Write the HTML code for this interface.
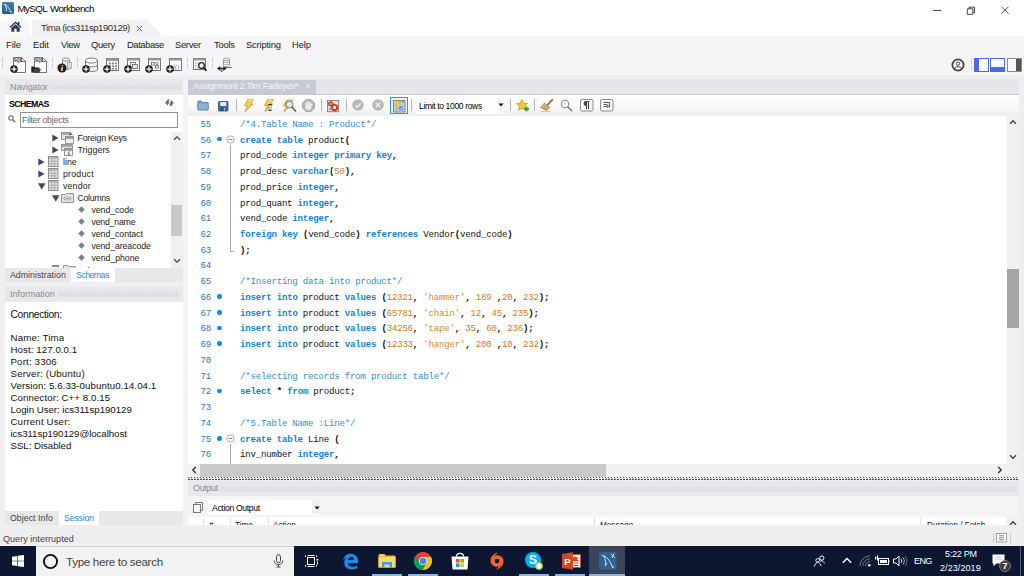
<!DOCTYPE html>
<html><head><meta charset="utf-8"><title>MySQL Workbench</title>
<style>
*{box-sizing:border-box;margin:0;padding:0}
html,body{width:1024px;height:576px;overflow:hidden}
body{position:relative;background:#efeff1;font-family:"Liberation Sans",sans-serif;font-size:9px;color:#111}
.a{position:absolute;white-space:nowrap}
.t{position:absolute;white-space:nowrap;line-height:12px;height:12px}
.m{font-size:9.4px;color:#222}
.tr{font-size:8.8px;color:#222}
.inf{font-size:9.7px;color:#111}
.hd{font-size:9px;color:#8a8a94}
.code{font-family:"Liberation Mono",monospace;font-size:9.1px;letter-spacing:-0.222px;line-height:12px;height:12px;color:#111;white-space:pre;position:absolute}
.k{color:#1582d0;font-weight:bold}
.c{color:#2f8fd0}
.n{color:#dc7a12}
.s{color:#e08a2c}
.ln{color:#2a78b4}
.dots{position:absolute;height:4.500px;background:repeating-conic-gradient(#d9d9df 0% 25%,transparent 0% 50%) 0 0/3px 3px}
svg{position:absolute;overflow:visible}
</style></head>
<body>

<div class="a" style="left:0;top:0;width:1024px;height:36px;background:#fff"></div>
<svg style="left:1.500px;top:2px" width="12" height="12" viewBox="0 0 13 13"><defs><linearGradient id="wbg" x1="0" y1="0" x2="0" y2="1"><stop offset="0" stop-color="#3c84aa"/><stop offset="1" stop-color="#1f5c86"/></linearGradient></defs><rect x="0" y="0" width="13" height="13" rx="1.500" fill="url(#wbg)"/><path d="M2.5 2.5 C5 3,7.5 5.5,9 10.5 M3.5 3 C4.5 5.5,5 7.5,5 9.5 M9 10.5 L10.8 11" stroke="#fff" stroke-width="0.9" fill="none" stroke-linecap="round"/></svg>
<div class="t m" id="t1" style="left:17.5px;top:2.7px;letter-spacing:-0.664px;font-size:9.9px;word-spacing:1.2px;color:#000">MySQL Workbench</div>
<svg style="left:930px;top:3px" width="84" height="14" viewBox="0 0 84 14"><path d="M3 7.500H11" stroke="#333" stroke-width="0.900"/><path d="M37.300 5.800H42.800V11.300H37.300Z M39 5.800V4.200H44.500V9.700H42.800" stroke="#333" stroke-width="0.900" fill="none"/><path d="M71.500 3.700L78.500 10.700M78.500 3.700L71.500 10.700" stroke="#333" stroke-width="0.900"/></svg>
<svg style="left:0;top:18px" width="32" height="18" viewBox="0 0 32 18"><path d="M0 18V1.500H24.500C26.500 1.500,27 2.500,27.800 4.500L30.500 18Z" fill="#f8f8fa"/></svg>
<svg style="left:31px;top:18px" width="135" height="18" viewBox="0 0 135 18"><path d="M1 18V3C1 2,1.500 1.500,2.500 1.500H117L131 18Z" fill="#f2f2f4"/></svg>
<svg style="left:9.400px;top:21px" width="13" height="11.300" viewBox="0 0 15 13"><path d="M7.500 0.500L0.500 6.800L1.600 7.800L7.500 2.600L13.400 7.800L14.500 6.800L12 4.500V1.200H10.300V3Z" fill="#1f2f4f"/><path d="M2.600 7.800L7.500 3.600L12.400 7.800V12.500H8.800V9H6.200V12.500H2.600Z" fill="#2c3f63"/></svg>
<div class="t m" id="t2" style="left:41px;top:21.8px;letter-spacing:-0.495px;font-size:9.6px;color:#333">Tima (ics311sp190129)</div>
<svg style="left:136px;top:25px" width="7" height="7" viewBox="0 0 7 7"><path d="M0.800 0.800L6.200 6.200M6.200 0.800L0.800 6.200" stroke="#666" stroke-width="1"/></svg>
<div class="a" style="left:0;top:36px;width:1024px;height:39px;background:#f5f5f7"></div>
<div class="t m" id="t3" style="left:6px;top:39px;letter-spacing:-0.077px;">File</div>
<div class="t m" id="t4" style="left:33px;top:39px;letter-spacing:-0.089px;">Edit</div>
<div class="t m" id="t5" style="left:61px;top:39px;letter-spacing:-0.339px;">View</div>
<div class="t m" id="t6" style="left:91px;top:39px;letter-spacing:-0.346px;">Query</div>
<div class="t m" id="t7" style="left:127px;top:39px;letter-spacing:-0.418px;">Database</div>
<div class="t m" id="t8" style="left:175px;top:39px;letter-spacing:-0.304px;">Server</div>
<div class="t m" id="t9" style="left:214px;top:39px;letter-spacing:-0.218px;">Tools</div>
<div class="t m" id="t10" style="left:246px;top:39px;letter-spacing:-0.187px;">Scripting</div>
<div class="t m" id="t11" style="left:292px;top:39px;letter-spacing:-0.120px;">Help</div>
<div class="a" style="left:2px;top:58px;width:1px;height:10px;background-image:linear-gradient(to bottom,#9fb0d4 50%,transparent 50%);background-size:1px 2px"></div>
<div class="a" style="left:52px;top:58px;width:1px;height:10px;background-image:linear-gradient(to bottom,#9fb0d4 50%,transparent 50%);background-size:1px 2px"></div>
<div class="a" style="left:77px;top:58px;width:1px;height:10px;background-image:linear-gradient(to bottom,#9fb0d4 50%,transparent 50%);background-size:1px 2px"></div>
<div class="a" style="left:187px;top:58px;width:1px;height:10px;background-image:linear-gradient(to bottom,#9fb0d4 50%,transparent 50%);background-size:1px 2px"></div>
<div class="a" style="left:212px;top:58px;width:1px;height:10px;background-image:linear-gradient(to bottom,#9fb0d4 50%,transparent 50%);background-size:1px 2px"></div>
<svg style="left:10px;top:57px" width="17" height="16" viewBox="0 0 17 16"><path d="M3.500 0.500H11.500L15.500 4.500V15.500H3.500Z" fill="#fbfbfb" stroke="#666" stroke-width="0.900"/><path d="M11.500 0.500V4.500H15.500" fill="none" stroke="#555" stroke-width="0.800"/><text x="4" y="5.400" font-family="Liberation Serif,serif" font-size="5.200" font-weight="bold" fill="#222" textLength="8.500" lengthAdjust="spacingAndGlyphs">SQL</text><circle cx="4" cy="12" r="3.800" fill="#1e1e1e"/><path d="M4 9.500V14.500M1.500 12H6.500" stroke="#fff" stroke-width="1.250"/></svg>
<svg style="left:31px;top:57px" width="17" height="16" viewBox="0 0 17 16"><path d="M3.500 0.500H11.500L15.500 4.500V15.500H3.500Z" fill="#fbfbfb" stroke="#666" stroke-width="0.900"/><path d="M11.500 0.500V4.500H15.500" fill="none" stroke="#555" stroke-width="0.800"/><text x="4" y="5.400" font-family="Liberation Serif,serif" font-size="5.200" font-weight="bold" fill="#222" textLength="8.500" lengthAdjust="spacingAndGlyphs">SQL</text><path d="M0.300 15.500V9.500H3L4 10.600H8.500V15.500Z" fill="#222"/><path d="M1.500 15.500L3.200 12H10L8.500 15.500Z" fill="#444"/></svg>
<svg style="left:57px;top:57px" width="16" height="16" viewBox="0 0 16 16"><path d="M5.500 2.500V11.500C5.500 13.300,12.500 13.300,12.500 11.500V2.500" fill="#e8e8e8" stroke="#777" stroke-width="0.800"/><ellipse cx="9" cy="2.500" rx="3.500" ry="1.500" fill="#f4f4f4" stroke="#777" stroke-width="0.800"/><rect x="10.500" y="5.500" width="4" height="6" fill="#ddd" stroke="#999" stroke-width="0.700"/><circle cx="5" cy="11" r="4.500" fill="#1e1e1e"/><text x="5" y="14" text-anchor="middle" font-family="Liberation Serif,serif" font-size="8.500" font-weight="bold" font-style="italic" fill="#fff">i</text></svg>
<svg style="left:82px;top:57px" width="17" height="16" viewBox="0 0 17 16"><path d="M3.500 3.500V12.500C3.500 15,15.500 15,15.500 12.500V3.500" fill="#fafafa" stroke="#666" stroke-width="0.900"/><ellipse cx="9.500" cy="3.500" rx="6" ry="2.500" fill="#fff" stroke="#666" stroke-width="0.900"/><path d="M3.500 8C3.500 10.500,15.500 10.500,15.500 8" fill="none" stroke="#555" stroke-width="0.800"/><circle cx="4" cy="12" r="3.800" fill="#1e1e1e"/><path d="M4 9.500V14.500M1.500 12H6.500" stroke="#fff" stroke-width="1.250"/></svg>
<svg style="left:103px;top:57px" width="17" height="16" viewBox="0 0 17 16"><rect x="3.500" y="1.500" width="12" height="12" fill="#fafafa" stroke="#666" stroke-width="0.900"/><rect x="3.500" y="1.500" width="12" height="2.500" fill="#9a9a9a"/><g fill="#888"><rect x="6" y="5.500" width="2" height="1.800"/><rect x="9" y="5.500" width="2" height="1.800"/><rect x="12" y="5.500" width="2" height="1.800"/><rect x="6" y="8.300" width="2" height="1.800"/><rect x="9" y="8.300" width="2" height="1.800"/><rect x="12" y="8.300" width="2" height="1.800"/><rect x="9" y="11" width="2" height="1.500"/><rect x="12" y="11" width="2" height="1.500"/></g><circle cx="4" cy="12" r="3.800" fill="#1e1e1e"/><path d="M4 9.500V14.500M1.500 12H6.500" stroke="#fff" stroke-width="1.250"/></svg>
<svg style="left:124px;top:57px" width="17" height="16" viewBox="0 0 17 16"><rect x="3.500" y="1.500" width="12" height="12" fill="#fafafa" stroke="#666" stroke-width="0.900"/><rect x="3.500" y="1.500" width="12" height="2" fill="#9a9a9a"/><rect x="6.500" y="5.500" width="5" height="4" fill="#fff" stroke="#666" stroke-width="0.800"/><rect x="8.500" y="7.500" width="5" height="4" fill="#eee" stroke="#666" stroke-width="0.800"/><circle cx="4" cy="12" r="3.800" fill="#1e1e1e"/><path d="M4 9.500V14.500M1.500 12H6.500" stroke="#fff" stroke-width="1.250"/></svg>
<svg style="left:145px;top:57px" width="17" height="16" viewBox="0 0 17 16"><rect x="3.500" y="1.500" width="12" height="12" fill="#fafafa" stroke="#666" stroke-width="0.900"/><rect x="3.500" y="1.500" width="12" height="2" fill="#9a9a9a"/><rect x="6.500" y="5.500" width="3" height="2.500" fill="none" stroke="#666" stroke-width="0.800"/><rect x="10.500" y="8.500" width="3" height="2.500" fill="none" stroke="#666" stroke-width="0.800"/><circle cx="12" cy="6.500" r="1.200" fill="none" stroke="#666" stroke-width="0.700"/><circle cx="4" cy="12" r="3.800" fill="#1e1e1e"/><path d="M4 9.500V14.500M1.500 12H6.500" stroke="#fff" stroke-width="1.250"/></svg>
<svg style="left:166px;top:57px" width="17" height="16" viewBox="0 0 17 16"><rect x="3.500" y="1.500" width="12" height="12" fill="#fafafa" stroke="#666" stroke-width="0.900"/><rect x="3.500" y="1.500" width="12" height="2" fill="#9a9a9a"/><text x="10" y="11.500" text-anchor="middle" font-family="Liberation Serif,serif" font-size="7" fill="#888" font-style="italic">f()</text><circle cx="4" cy="12" r="3.800" fill="#1e1e1e"/><path d="M4 9.500V14.500M1.500 12H6.500" stroke="#fff" stroke-width="1.250"/></svg>
<svg style="left:193px;top:57px" width="15" height="16" viewBox="0 0 15 16"><rect x="0.500" y="1.500" width="12" height="11" fill="#fafafa" stroke="#666" stroke-width="0.900"/><rect x="0.500" y="1.500" width="12" height="2" fill="#9a9a9a"/><path d="M2 6H5M2 8.500H4.500M2 11H5" stroke="#888" stroke-width="1" stroke-dasharray="1 1"/><circle cx="8.500" cy="8.500" r="2.800" fill="#fff" stroke="#222" stroke-width="1.300"/><path d="M10.600 10.600L13.500 13.800" stroke="#222" stroke-width="1.800"/></svg>
<svg style="left:216px;top:57px" width="17" height="16" viewBox="0 0 17 16"><path d="M7.500 2.300V8.500C7.500 10,13.500 10,13.500 8.500V2.300" fill="#f4f4f4" stroke="#8a8a8a" stroke-width="0.800"/><ellipse cx="10.500" cy="2.300" rx="3" ry="1.300" fill="#fcfcfc" stroke="#8a8a8a" stroke-width="0.800"/><path d="M7.500 4.500C7.500 5.800,13.500 5.800,13.500 4.500M7.500 6.600C7.500 7.900,13.500 7.900,13.500 6.600" fill="none" stroke="#8a8a8a" stroke-width="0.700"/><path d="M9 10.600H16" stroke="#666" stroke-width="0.900"/><path d="M10.500 9.500V11" stroke="#666" stroke-width="0.900"/><path d="M1 11.500L4.200 9V10.700H6V12.300H4.200V14Z" fill="#222"/><path d="M10.500 11.500L7.300 9V10.700H5.500V12.300H7.300V14Z" fill="#222"/><path d="M4 13.500L5.700 15L7.500 13.500Z" fill="#222"/></svg>
<svg style="left:951px;top:58px" width="14" height="14" viewBox="0 0 14 14"><circle cx="7" cy="7" r="5.600" fill="#fff" stroke="#444" stroke-width="1.800"/><circle cx="7" cy="5.600" r="1.700" fill="none" stroke="#444" stroke-width="1"/><path d="M3.600 10.500C4.200 8,9.800 8,10.400 10.500" fill="none" stroke="#444" stroke-width="1"/></svg>
<div class="a" style="left:971px;top:59px;width:1px;height:11px;background-image:linear-gradient(to bottom,#b0b8d0 50%,transparent 50%);background-size:1px 2px"></div>
<div class="a" style="left:974px;top:58px;width:15px;height:14px;border:1px solid #4a6ae0;background:#f8f8fa"><div style="width:4px;height:12px;background:#4a6ae0"></div></div>
<div class="a" style="left:990px;top:58px;width:15px;height:14px;border:1px solid #4a6ae0;background:#f8f8fa"><div style="margin-top:8px;width:13px;height:4px;background:#4a6ae0"></div></div>
<div class="a" style="left:1007px;top:58px;width:15px;height:14px;border:1px solid #8a8a8a;background:#f8f8fa"><div style="margin-left:8px;width:5px;height:12px;background:#555"></div></div>
<div class="a" style="left:183px;top:79px;width:4.5px;height:446px;background:#f3f3f5;"></div>
<div class="a" style="left:4.5px;top:79px;width:178.5px;height:16px;background:#e8e8ea;"></div>
<div class="t hd" id="t12" style="left:10px;top:81px;letter-spacing:-0.081px;">Navigator</div>
<div class="dots" style="left:50px;top:85px;width:131px"></div>
<div class="a" style="left:4.5px;top:95px;width:178.5px;height:173px;background:#fff;"></div>
<div class="t m" id="t13" style="left:9px;top:97.7px;letter-spacing:-0.600px;font-weight:bold;font-size:8.8px;color:#000">SCHEMAS</div>
<svg style="left:165px;top:99px" width="9" height="7.5" viewBox="0 0 9 7.500"><path d="M4.300 0.300C2.200 0.300,1.300 1.800,1.300 3.100H0L2.300 6.600L4.600 3.100H3.600C3.600 2.500,3.800 2.200,4.300 2.100Z" fill="#587192"/><path d="M4.700 7.300C6.800 7.300,7.700 5.800,7.700 4.500H9L6.700 1L4.400 4.500H5.400C5.400 5.100,5.200 5.400,4.700 5.500Z" fill="#587192"/></svg>
<svg style="left:8px;top:115px" width="8" height="8" viewBox="0 0 8 8"><circle cx="3" cy="3" r="2.200" fill="none" stroke="#777" stroke-width="1.200"/><path d="M4.600 4.600L7.300 7.300" stroke="#777" stroke-width="1.500"/></svg>
<div class="a" style="left:20px;top:112px;width:158px;height:15.600px;border:1px solid #959595;background:#fff"></div>
<div class="t tr" id="t14" style="left:22px;top:114px;letter-spacing:-0.220px;color:#666">Filter objects</div>
<div class="a" style="left:171px;top:131.5px;width:12px;height:136.5px;background:#f0f0f0;"></div>
<div class="a" style="left:171px;top:205px;width:11px;height:31px;background:#c9c9c9;"></div>
<svg style="left:173px;top:135px" width="8" height="6" viewBox="0 0 8 6"><path d="M1 4.800L4 1.800L7 4.800" fill="none" stroke="#444" stroke-width="1.300"/></svg>
<svg style="left:173px;top:258px" width="8" height="6" viewBox="0 0 8 6"><path d="M1 1.200L4 4.200L7 1.200" fill="none" stroke="#444" stroke-width="1.300"/></svg>
<svg style="left:52px;top:134px" width="7" height="8" viewBox="0 0 7 8"><path d="M0.300 0.500L6.600 4L0.300 7.500Z" fill="#3d4a68"/></svg>
<svg style="left:61px;top:132px" width="13" height="12" viewBox="0 0 13 12"><rect x="0.500" y="0.500" width="8" height="7" fill="#e6e6e6" stroke="#8e8e8e" stroke-width="0.900"/><rect x="1" y="1" width="7" height="1.800" fill="#a4a4a4"/><rect x="4.500" y="4.500" width="8" height="7" fill="#f0f0f0" stroke="#8e8e8e" stroke-width="0.900"/><rect x="5" y="5" width="7" height="1.800" fill="#999"/><path d="M9 0L12 3H9Z" fill="#3a5a8a"/></svg>
<div class="t tr" id="t15" style="left:77.5px;top:132px;letter-spacing:-0.211px;">Foreign Keys</div>
<svg style="left:52px;top:146px" width="7" height="8" viewBox="0 0 7 8"><path d="M0.300 0.500L6.600 4L0.300 7.500Z" fill="#3d4a68"/></svg>
<svg style="left:61px;top:144px" width="13" height="12" viewBox="0 0 13 12"><rect x="0.500" y="0.500" width="11" height="6" fill="#e6e6e6" stroke="#8e8e8e" stroke-width="0.900"/><rect x="1" y="1" width="10" height="1.800" fill="#a4a4a4"/><rect x="3.500" y="4.500" width="8" height="7" fill="#f0f0f0" stroke="#8e8e8e" stroke-width="0.900"/><rect x="4" y="5" width="7" height="1.800" fill="#999"/><path d="M8.500 7.500L7 10H8.500L7.500 12" stroke="#555" stroke-width="0.800" fill="none"/></svg>
<div class="t tr" id="t16" style="left:77.5px;top:144px;letter-spacing:0.045px;">Triggers</div>
<svg style="left:38px;top:158px" width="7" height="8" viewBox="0 0 7 8"><path d="M0.300 0.500L6.600 4L0.300 7.500Z" fill="#3d4a68"/></svg>
<svg style="left:48px;top:156px" width="11" height="11" viewBox="0 0 11 11"><rect x="0.500" y="0.500" width="9.500" height="10" fill="#e9e9e9" stroke="#8c8c8c" stroke-width="1"/><rect x="1" y="1" width="8.500" height="2" fill="#b8b8b8"/><path d="M1 5.300H9.500M1 7.900H9.500M3.800 3V10M6.700 3V10" stroke="#a2a2a2" stroke-width="0.900"/></svg>
<div class="t tr" id="t17" style="left:63px;top:156px;letter-spacing:0.024px;">line</div>
<svg style="left:38px;top:170px" width="7" height="8" viewBox="0 0 7 8"><path d="M0.300 0.500L6.600 4L0.300 7.500Z" fill="#3d4a68"/></svg>
<svg style="left:48px;top:168px" width="11" height="11" viewBox="0 0 11 11"><rect x="0.500" y="0.500" width="9.500" height="10" fill="#e9e9e9" stroke="#8c8c8c" stroke-width="1"/><rect x="1" y="1" width="8.500" height="2" fill="#b8b8b8"/><path d="M1 5.300H9.500M1 7.900H9.500M3.800 3V10M6.700 3V10" stroke="#a2a2a2" stroke-width="0.900"/></svg>
<div class="t tr" id="t18" style="left:63px;top:168px;letter-spacing:0.208px;">product</div>
<svg style="left:38px;top:183px" width="8" height="7" viewBox="0 0 8 7"><path d="M0 0.300H7.500L3.750 6.700Z" fill="#3d4a68"/></svg>
<svg style="left:48px;top:180px" width="11" height="11" viewBox="0 0 11 11"><rect x="0.500" y="0.500" width="9.500" height="10" fill="#e9e9e9" stroke="#8c8c8c" stroke-width="1"/><rect x="1" y="1" width="8.500" height="2" fill="#b8b8b8"/><path d="M1 5.300H9.500M1 7.900H9.500M3.800 3V10M6.700 3V10" stroke="#a2a2a2" stroke-width="0.900"/></svg>
<div class="t tr" id="t19" style="left:63px;top:180px;letter-spacing:0.149px;">vendor</div>
<svg style="left:52px;top:195px" width="8" height="7" viewBox="0 0 8 7"><path d="M0 0.300H7.500L3.750 6.700Z" fill="#3d4a68"/></svg>
<svg style="left:61px;top:193px" width="13" height="10" viewBox="0 0 13 10"><path d="M0.500 1.500H4.500L5.500 0.500H12.500V9.500H0.500Z" fill="#e4e4e6" stroke="#8a8a8a" stroke-width="0.900"/><path d="M5 3.500L3 5.500L5 7.500M8 3.500L10 5.500L8 7.500" fill="none" stroke="#7a7d86" stroke-width="1"/><circle cx="6.500" cy="5.500" r="1" fill="#7a7d86"/></svg>
<div class="t tr" id="t20" style="left:77.5px;top:192px;letter-spacing:-0.346px;">Columns</div>
<svg style="left:78px;top:206px" width="7" height="7" viewBox="0 0 7 7"><path d="M3.500 0.300L6.700 3.500L3.500 6.700L0.300 3.500Z" fill="#7d8088"/></svg>
<div class="t tr" id="t21" style="left:91.5px;top:204px;letter-spacing:-0.083px;">vend_code</div>
<svg style="left:78px;top:218px" width="7" height="7" viewBox="0 0 7 7"><path d="M3.500 0.300L6.700 3.500L3.500 6.700L0.300 3.500Z" fill="#7d8088"/></svg>
<div class="t tr" id="t22" style="left:91.5px;top:216px;letter-spacing:-0.243px;">vend_name</div>
<svg style="left:78px;top:230px" width="7" height="7" viewBox="0 0 7 7"><path d="M3.500 0.300L6.700 3.500L3.500 6.700L0.300 3.500Z" fill="#7d8088"/></svg>
<div class="t tr" id="t23" style="left:91.5px;top:228px;letter-spacing:-0.087px;">vend_contact</div>
<svg style="left:78px;top:242px" width="7" height="7" viewBox="0 0 7 7"><path d="M3.500 0.300L6.700 3.500L3.500 6.700L0.300 3.500Z" fill="#7d8088"/></svg>
<div class="t tr" id="t24" style="left:91.5px;top:240px;letter-spacing:-0.104px;">vend_areacode</div>
<svg style="left:78px;top:254px" width="7" height="7" viewBox="0 0 7 7"><path d="M3.500 0.300L6.700 3.500L3.500 6.700L0.300 3.500Z" fill="#7d8088"/></svg>
<div class="t tr" id="t25" style="left:91.5px;top:252px;letter-spacing:-0.064px;">vend_phone</div>
<div class="a" style="left:50px;top:264px;width:60px;height:4px;overflow:hidden"><svg style="left:2px;top:1px" width="24" height="6" viewBox="0 0 24 6"><path d="M0 1H7" stroke="#34425e" stroke-width="1.200"/><path d="M11.500 3.500V0.500H16L17 1.500H23.500V3.500" fill="#e4e4e6" stroke="#8a8a8a" stroke-width="0.900"/></svg><div class="t tr" style="left:27.500px;top:1px">Indexes</div></div>
<div class="a" style="left:4.5px;top:268px;width:178.5px;height:14px;background:#e8e8ea;"></div>
<div class="a" style="left:70.5px;top:268px;width:44.5px;height:14px;background:#fff;"></div>
<div class="t tr" id="t26" style="left:10px;top:269px;letter-spacing:0.004px;color:#444">Administration</div>
<div class="t tr" id="t27" style="left:76px;top:269px;letter-spacing:-0.553px;color:#3584d8">Schemas</div>
<div class="a" style="left:4.5px;top:287px;width:178.5px;height:15px;background:#e8e8ea;"></div>
<div class="t hd" id="t28" style="left:10px;top:287.7px;letter-spacing:-0.021px;">Information</div>
<div class="dots" style="left:58px;top:292px;width:121px"></div>
<div class="a" style="left:4.5px;top:302px;width:178.5px;height:209px;background:#fff;"></div>
<div class="t inf" id="t29" style="left:10.5px;top:309px;letter-spacing:-0.334px;font-size:10.3px">Connection:</div>
<div class="t inf" id="t30" style="left:10.5px;top:332.0px;letter-spacing:0.158px;">Name: Tima</div>
<div class="t inf" id="t31" style="left:10.5px;top:344.05px;letter-spacing:0.073px;">Host: 127.0.0.1</div>
<div class="t inf" id="t32" style="left:10.5px;top:356.1px;letter-spacing:0.160px;">Port: 3306</div>
<div class="t inf" id="t33" style="left:10.5px;top:368.15px;letter-spacing:0.168px;">Server: (Ubuntu)</div>
<div class="t inf" id="t34" style="left:10.5px;top:380.2px;letter-spacing:0.079px;">Version: 5.6.33-0ubuntu0.14.04.1</div>
<div class="t inf" id="t35" style="left:10.5px;top:392.25px;letter-spacing:0.085px;">Connector: C++ 8.0.15</div>
<div class="t inf" id="t36" style="left:10.5px;top:404.3px;letter-spacing:-0.030px;">Login User: ics311sp190129</div>
<div class="t inf" id="t37" style="left:10.5px;top:416.35px;letter-spacing:0.128px;">Current User:</div>
<div class="t inf" id="t38" style="left:10.5px;top:428.4px;letter-spacing:-0.068px;">ics311sp190129@localhost</div>
<div class="t inf" id="t39" style="left:10.5px;top:440.45px;letter-spacing:-0.045px;">SSL: Disabled</div>
<div class="a" style="left:4.5px;top:510.8px;width:178.5px;height:13.9px;background:#e8e8ea;"></div>
<div class="a" style="left:58.5px;top:510.8px;width:40.5px;height:13.9px;background:#fff;"></div>
<div class="t tr" id="t40" style="left:10px;top:512px;letter-spacing:0.023px;color:#444">Object Info</div>
<div class="t tr" id="t41" style="left:64px;top:512px;letter-spacing:-0.214px;color:#3584d8">Session</div>
<div class="a" style="left:187.5px;top:79.3px;width:831.5px;height:15.7px;background:#e6e6e8;"></div>
<div class="a" style="left:187.5px;top:93.7px;width:831.5px;height:1.3px;background:#c6cad5;"></div>
<div class="a" style="left:187.5px;top:79.5px;width:128.5px;height:15.5px;background:#c6cad5;"></div>
<div class="t m" id="t42" style="left:193px;top:80px;letter-spacing:-0.149px;font-size:8.8px;color:#f4f6fa">Assignment 2 Tim Fadeyev*</div>
<svg style="left:305px;top:83px" width="6" height="6" viewBox="0 0 6 6"><path d="M0.500 0.500L5.500 5.500M5.500 0.500L0.500 5.500" stroke="#e8ebf2" stroke-width="1"/></svg>
<div class="a" style="left:187.5px;top:95px;width:831.5px;height:21px;background:linear-gradient(to bottom,#ffffff 0%,#f8f8f8 60%,#ededed 100%);"></div>
<svg style="left:197px;top:100px" width="12" height="10.5" viewBox="0 0 13 12"><path d="M0.500 2.500C0.500 1.500,1 1.200,1.800 1.200H4.500L5.800 2.800H11.500C12.200 2.800,12.500 3.200,12.500 4V10.500C12.500 11.200,12 11.500,11.500 11.500H1.500C0.900 11.500,0.500 11.100,0.500 10.500Z" fill="#7fa3c4" stroke="#3f6f98" stroke-width="0.900"/><path d="M1.200 4.200H11.800V10.800H1.200Z" fill="#8db2d2"/></svg>
<svg style="left:218px;top:99.5px" width="10.5" height="11.5" viewBox="0 0 11 12"><rect x="0.500" y="1.500" width="10" height="10" rx="0.800" fill="#3f6d98" stroke="#2d557c" stroke-width="0.900"/><rect x="2.300" y="2.200" width="6.400" height="4" fill="#e8eef4"/><rect x="3" y="8" width="5" height="3.500" fill="#284a6c"/><rect x="6" y="8.600" width="1.300" height="2.300" fill="#dfe6ee"/></svg>
<div class="a" style="left:236px;top:99px;width:1px;height:12px;background:#b4b4b4;"></div>
<svg style="left:242.5px;top:98.5px" width="12" height="13.5" viewBox="0 0 12 13"><path d="M4.500 0.500H10.500L7.300 4.800H10L2 12.500L4.300 6.500H1.500Z" fill="#f1cf45" stroke="#b8922a" stroke-width="0.700"/><path d="M5 1.200H8.800L6 4.800" fill="none" stroke="#fbeea0" stroke-width="0.800"/></svg>
<svg style="left:263px;top:98.5px" width="12" height="13.5" viewBox="0 0 12 13.5"><path d="M4.500 0.500H10.500L7.300 4.800H10L2 12.500L4.300 6.500H1.500Z" fill="#f1cf45" stroke="#b8922a" stroke-width="0.700"/><path d="M5 1.200H8.800L6 4.800" fill="none" stroke="#fbeea0" stroke-width="0.800"/><path d="M5.200 5.500H8.800M7 5.500V11.500M5.500 11.500H8.500" stroke="#333" stroke-width="1.100" fill="none"/><rect x="6" y="6" width="2" height="5" fill="#f8f8f8" stroke="#444" stroke-width="0.500"/></svg>
<svg style="left:281.5px;top:98.5px" width="15" height="14" viewBox="0 0 15 14"><g transform="translate(0,0.500)"><path d="M4.500 0.500H10.500L7.300 4.800H10L2 12.500L4.300 6.500H1.500Z" fill="#f1cf45" stroke="#b8922a" stroke-width="0.700"/><path d="M5 1.200H8.800L6 4.800" fill="none" stroke="#fbeea0" stroke-width="0.800"/></g><circle cx="7.500" cy="5.500" r="3.500" fill="#e6f0f6" fill-opacity="0.850" stroke="#707070" stroke-width="1"/><path d="M10.200 8.200L13.600 12" stroke="#5c5c5c" stroke-width="1.600" stroke-linecap="round"/></svg>
<svg style="left:302px;top:98.5px" width="13" height="13" viewBox="0 0 13 13"><path d="M4 0.500H9L12.500 4V9L9 12.500H4L0.500 9V4Z" fill="#b5b5b5" stroke="#9c9c9c" stroke-width="0.800"/><path d="M4 7V4.200M5.600 6.500V3.200M7.200 6.500V3.200M8.800 7V4.200M4 6.500C3.500 9.500,5 10.500,6.500 10.500C8.500 10.500,9 9,8.800 6.500L10 5.500" stroke="#f2f2f2" stroke-width="1.300" fill="none" stroke-linecap="round"/><path d="M4 6.500H8.800V9.500H4.500Z" fill="#f2f2f2"/></svg>
<div class="a" style="left:321px;top:99px;width:1px;height:12px;background:#b4b4b4;"></div>
<svg style="left:327.3px;top:99.5px" width="12.2" height="12.2" viewBox="0 0 13 13"><rect x="0.500" y="0.500" width="12" height="12" fill="#e3e3e3" stroke="#787878" stroke-width="0.900"/><circle cx="4" cy="4" r="2.800" fill="#d42a1a"/><path d="M2.800 2.800L5.200 5.200M5.200 2.800L2.800 5.200" stroke="#fff" stroke-width="0.900"/><circle cx="8" cy="8" r="3.600" fill="#e2431e" stroke="#a8200c" stroke-width="0.600"/><rect x="6.800" y="6.500" width="2.600" height="3" fill="#fff"/><rect x="2" y="8.500" width="2.500" height="2.500" fill="#aaa"/></svg>
<div class="a" style="left:346px;top:99px;width:1px;height:12px;background:#b4b4b4;"></div>
<svg style="left:352px;top:99px" width="12" height="12" viewBox="0 0 12 12"><circle cx="6" cy="6" r="5.800" fill="#b9b9b9"/><path d="M3.300 6.200L5.300 8.200L8.800 4.200" stroke="#ececec" stroke-width="1.600" fill="none"/></svg>
<svg style="left:372px;top:99px" width="12" height="12" viewBox="0 0 12 12"><circle cx="6" cy="6" r="5.800" fill="#b9b9b9"/><path d="M3.800 3.800L8.200 8.200M8.200 3.800L3.800 8.200" stroke="#ececec" stroke-width="1.600" fill="none"/></svg>
<div class="a" style="left:390px;top:97px;width:18px;height:17px;border:1px solid #3c8fe0;background:#e6f1fb"></div>
<svg style="left:393px;top:99.5px" width="12" height="12" viewBox="0 0 12 12"><rect x="0.500" y="0.500" width="11.500" height="11.500" fill="#cdcdcd" stroke="#7c7c7c" stroke-width="0.900"/><path d="M4.500 1H8L6.200 4H8L3 10.500L4.300 5.800H2.500Z" fill="#f0d050" stroke="#c29a2a" stroke-width="0.500"/><circle cx="8" cy="8.200" r="2.900" fill="#4f8fe0" stroke="#e6eefa" stroke-width="0.700"/><path d="M6.700 8.300L7.700 9.300L9.400 7.300" stroke="#fff" stroke-width="0.800" fill="none"/><circle cx="10" cy="2" r="0.900" fill="#5ab04a"/></svg>
<div class="a" style="left:411px;top:99px;width:1px;height:12px;background:#b4b4b4;"></div>
<div class="a" style="left:415px;top:97.5px;width:90px;height:16px;background:#fff;"></div>
<div class="a" style="left:497px;top:98px;width:8px;height:15px;background:#f4f4f4;"></div>
<div class="t m" id="t43" style="left:419px;top:99.5px;letter-spacing:-0.386px;font-size:8.6px;color:#000">Limit to 1000 rows</div>
<svg style="left:498px;top:103px" width="6" height="4" viewBox="0 0 6 4"><path d="M0.500 0.500H5.500L3 3.500Z" fill="#111"/></svg>
<div class="a" style="left:510px;top:99px;width:1px;height:12px;background:#b4b4b4;"></div>
<svg style="left:516px;top:99px" width="14" height="13" viewBox="0 0 14 13"><path d="M6 0.500L7.700 4.200L11.600 4.600L8.700 7.300L9.500 11.200L6 9.200L2.500 11.200L3.300 7.300L0.400 4.600L4.300 4.200Z" fill="#f3c832" stroke="#c2922a" stroke-width="0.700"/><path d="M10.500 7.500V12.500M8 10H13" stroke="#3fa02c" stroke-width="2"/></svg>
<div class="a" style="left:534px;top:99px;width:1px;height:12px;background:#b4b4b4;"></div>
<svg style="left:540px;top:99px" width="14" height="13" viewBox="0 0 14 13"><path d="M12.500 0.500L7.500 6" stroke="#8a5a2a" stroke-width="1.600" stroke-linecap="round"/><path d="M4.500 4L9.500 8.500L7 11.500L0.500 8.500Z" fill="#dcb777" stroke="#9c7436" stroke-width="0.700"/><path d="M2 8.500L6.500 10.800M3.500 6.500L8 9.500" stroke="#a8824a" stroke-width="0.600"/><path d="M1 12.500H10" stroke="#c8c8c8" stroke-width="1"/></svg>
<svg style="left:560px;top:99px" width="13" height="13" viewBox="0 0 13 13"><circle cx="5" cy="5" r="3.700" fill="#f4f6f8" stroke="#8c8c8c" stroke-width="1.100"/><path d="M3.500 3.500L5.500 5.500" stroke="#c0c0c0" stroke-width="0.700"/><path d="M8 8L11.800 11.800" stroke="#7c7c7c" stroke-width="1.500" stroke-linecap="round"/></svg>
<svg style="left:580px;top:99px" width="14" height="13" viewBox="0 0 14 13"><rect x="0.500" y="0.500" width="12.500" height="11.500" rx="1.500" fill="#f8f8f8" stroke="#7e7e7e" stroke-width="0.900"/><path d="M8.500 2.500V10M6.500 2.500V10M9.500 2.500H5.800C3.600 2.500,3.600 6.300,5.800 6.300H6.500" stroke="#444" stroke-width="1.100" fill="none"/><path d="M5.800 2.500C3.600 2.500,3.600 6.300,5.800 6.300H6.500V2.500Z" fill="#444"/></svg>
<svg style="left:600px;top:99px" width="14" height="13" viewBox="0 0 14 13"><rect x="0.500" y="0.500" width="12.500" height="11.500" rx="1.500" fill="#f8f8f8" stroke="#7e7e7e" stroke-width="0.900"/><path d="M3.500 3.500H9.500V8.500M3.500 5.500H7M3.500 7.500H6" stroke="#555" stroke-width="1" fill="none"/><path d="M9.500 7.200H6.500M8 5.800L6.500 7.200L8 8.600" stroke="#555" stroke-width="1" fill="none"/></svg>
<div class="a" style="left:187.5px;top:116px;width:819.5px;height:348px;background:#fff;"></div>
<div class="a" style="left:1007px;top:116px;width:12px;height:348px;background:#f0f0f0;"></div>
<div class="a" style="left:1007px;top:269px;width:11.5px;height:58.5px;background:#a6a6a6;"></div>
<svg style="left:1009px;top:119px" width="8" height="6" viewBox="0 0 8 6"><path d="M1 4.800L4 1.800L7 4.800" fill="none" stroke="#444" stroke-width="1.400"/></svg>
<svg style="left:1009px;top:454px" width="8" height="6" viewBox="0 0 8 6"><path d="M1 1.200L4 4.200L7 1.200" fill="none" stroke="#444" stroke-width="1.400"/></svg>
<div class="a" style="left:187.5px;top:464px;width:831.5px;height:12.5px;background:#f0f0f0;"></div>
<div class="a" style="left:200px;top:464px;width:405.5px;height:12.5px;background:#c9c9c9;"></div>
<svg style="left:191px;top:466px" width="6" height="8" viewBox="0 0 6 8"><path d="M4.800 1L1.800 4L4.800 7" fill="none" stroke="#333" stroke-width="1.400"/></svg>
<svg style="left:997px;top:466px" width="6" height="8" viewBox="0 0 6 8"><path d="M1.200 1L4.200 4L1.200 7" fill="none" stroke="#333" stroke-width="1.400"/></svg>
<div class="a" style="left:189px;top:116px;width:818px;height:348px;overflow:hidden">
<div class="a" style="left:41px;top:28.54px;width:1px;height:106.20px;background:#a9a9a2"></div>
<div class="a" style="left:41px;top:134.74px;width:4px;height:1px;background:#a9a9a2"></div>
<div class="a" style="left:41px;top:327.65px;width:1px;height:40px;background:#a9a9a2"></div>
<div class="code ln" style="left:11.500px;top:2.80px">55</div>
<div class="code" style="left:51px;top:2.80px"><span class="c">/*4.Table Name : Product*/</span></div>
<div class="code ln" style="left:11.500px;top:18.54px">56</div>
<div class="a" style="left:28.400px;top:20.84px;width:4.600px;height:4.600px;border-radius:2.300px;background:#1a86e4"></div>
<svg style="left:37px;top:19.04px" width="9" height="9" viewBox="0 0 9 9"><circle cx="4.500" cy="4.500" r="3.700" fill="#fff" stroke="#a2a2a2" stroke-width="0.900"/><path d="M2.500 4.500H6.500" stroke="#777" stroke-width="0.900"/></svg>
<div class="code" style="left:51px;top:18.54px"><span class="k">create</span> <span class="k">table</span> product<b>(</b></div>
<div class="code ln" style="left:11.500px;top:34.28px">57</div>
<div class="code" style="left:51px;top:34.28px">prod_code <span class="k">integer</span> <span class="k">primary</span> <span class="k">key</span><b>,</b></div>
<div class="code ln" style="left:11.500px;top:50.03px">58</div>
<div class="code" style="left:51px;top:50.03px">prod_desc <span class="k">varchar</span><b>(</b><span class="n">50</span><b>),</b></div>
<div class="code ln" style="left:11.500px;top:65.77px">59</div>
<div class="code" style="left:51px;top:65.77px">prod_price <span class="k">integer</span><b>,</b></div>
<div class="code ln" style="left:11.500px;top:81.51px">60</div>
<div class="code" style="left:51px;top:81.51px">prod_quant <span class="k">integer</span><b>,</b></div>
<div class="code ln" style="left:11.500px;top:97.25px">61</div>
<div class="code" style="left:51px;top:97.25px">vend_code <span class="k">integer</span><b>,</b></div>
<div class="code ln" style="left:11.500px;top:113.00px">62</div>
<div class="code" style="left:51px;top:113.00px"><span class="k">foreign</span> <span class="k">key</span> <b>(</b>vend_code<b>)</b> <span class="k">references</span> Vendor<b>(</b>vend_code<b>)</b></div>
<div class="code ln" style="left:11.500px;top:128.74px">63</div>
<div class="code" style="left:51px;top:128.74px"><b>);</b></div>
<div class="code ln" style="left:11.500px;top:144.48px">64</div>
<div class="code ln" style="left:11.500px;top:160.22px">65</div>
<div class="code" style="left:51px;top:160.22px"><span class="c">/*Inserting data into product*/</span></div>
<div class="code ln" style="left:11.500px;top:175.97px">66</div>
<div class="a" style="left:28.400px;top:178.27px;width:4.600px;height:4.600px;border-radius:2.300px;background:#1a86e4"></div>
<div class="code" style="left:51px;top:175.97px"><span class="k">insert</span> <span class="k">into</span> product <span class="k">values</span> <b>(</b><span class="n">12321</span><b>,</b> <span class="s">'hammer'</span><b>,</b> <span class="n">189</span> <b>,</b><span class="n">20</span><b>,</b> <span class="n">232</span><b>);</b></div>
<div class="code ln" style="left:11.500px;top:191.71px">67</div>
<div class="a" style="left:28.400px;top:194.01px;width:4.600px;height:4.600px;border-radius:2.300px;background:#1a86e4"></div>
<div class="code" style="left:51px;top:191.71px"><span class="k">insert</span> <span class="k">into</span> product <span class="k">values</span> <b>(</b><span class="n">65781</span><b>,</b> <span class="s">'chain'</span><b>,</b> <span class="n">12</span><b>,</b> <span class="n">45</span><b>,</b> <span class="n">235</span><b>);</b></div>
<div class="code ln" style="left:11.500px;top:207.45px">68</div>
<div class="a" style="left:28.400px;top:209.75px;width:4.600px;height:4.600px;border-radius:2.300px;background:#1a86e4"></div>
<div class="code" style="left:51px;top:207.45px"><span class="k">insert</span> <span class="k">into</span> product <span class="k">values</span> <b>(</b><span class="n">34256</span><b>,</b> <span class="s">'tape'</span><b>,</b> <span class="n">35</span><b>,</b> <span class="n">60</span><b>,</b> <span class="n">236</span><b>);</b></div>
<div class="code ln" style="left:11.500px;top:223.19px">69</div>
<div class="a" style="left:28.400px;top:225.49px;width:4.600px;height:4.600px;border-radius:2.300px;background:#1a86e4"></div>
<div class="code" style="left:51px;top:223.19px"><span class="k">insert</span> <span class="k">into</span> product <span class="k">values</span> <b>(</b><span class="n">12333</span><b>,</b> <span class="s">'hanger'</span><b>,</b> <span class="n">200</span> <b>,</b><span class="n">10</span><b>,</b> <span class="n">232</span><b>);</b></div>
<div class="code ln" style="left:11.500px;top:238.93px">70</div>
<div class="code ln" style="left:11.500px;top:254.68px">71</div>
<div class="code" style="left:51px;top:254.68px"><span class="c">/*selecting records from product table*/</span></div>
<div class="code ln" style="left:11.500px;top:270.42px">72</div>
<div class="a" style="left:28.400px;top:272.72px;width:4.600px;height:4.600px;border-radius:2.300px;background:#1a86e4"></div>
<div class="code" style="left:51px;top:270.42px"><span class="k">select</span> <b>*</b> <span class="k">from</span> product<b>;</b></div>
<div class="code ln" style="left:11.500px;top:286.16px">73</div>
<div class="code ln" style="left:11.500px;top:301.90px">74</div>
<div class="code" style="left:51px;top:301.90px"><span class="c">/*5.Table Name :Line*/</span></div>
<div class="code ln" style="left:11.500px;top:317.65px">75</div>
<div class="a" style="left:28.400px;top:319.95px;width:4.600px;height:4.600px;border-radius:2.300px;background:#1a86e4"></div>
<svg style="left:37px;top:318.15px" width="9" height="9" viewBox="0 0 9 9"><circle cx="4.500" cy="4.500" r="3.700" fill="#fff" stroke="#a2a2a2" stroke-width="0.900"/><path d="M2.500 4.500H6.500" stroke="#777" stroke-width="0.900"/></svg>
<div class="code" style="left:51px;top:317.65px"><span class="k">create</span> <span class="k">table</span> Line <b>(</b></div>
<div class="code ln" style="left:11.500px;top:333.39px">76</div>
<div class="code" style="left:51px;top:333.39px">inv_number <span class="k">integer</span><b>,</b></div>
</div>
<div class="a" style="left:188px;top:476.800px;width:831px;height:1.100px;background-image:linear-gradient(to right,#4a4a4a 50%,transparent 50%);background-size:3px 1px"></div>
<div class="a" style="left:188px;top:479px;width:831px;height:1.200px;background-image:linear-gradient(to right,#4a4a4a 62%,transparent 62%);background-size:3px 1px"></div>
<div class="a" style="left:188px;top:477px;width:1px;height:3px;background:#555;"></div>
<div class="a" style="left:188px;top:477.9px;width:831px;height:1.1px;background:#e4e4e6;"></div>
<div class="a" style="left:187.5px;top:481.2px;width:831.5px;height:14.8px;background:#e8e8ea;"></div>
<div class="t hd" id="t44" style="left:193px;top:482.1px;letter-spacing:-0.372px;">Output</div>
<div class="dots" style="left:221px;top:487px;width:796px"></div>
<div class="a" style="left:187.5px;top:496px;width:831.5px;height:21px;background:#f4f4f6;"></div>
<svg style="left:193px;top:502px" width="11" height="11" viewBox="0 0 11 11"><path d="M2.500 2.500V0.500H9.500V8.500H7.500" fill="none" stroke="#6e6e6e" stroke-width="0.900"/><rect x="0.500" y="2.500" width="7" height="8" fill="#f6f6f6" stroke="#6e6e6e" stroke-width="0.900"/></svg>
<div class="a" style="left:208px;top:499.5px;width:112px;height:15px;background:#fff;"></div>
<div class="a" style="left:312px;top:500px;width:8px;height:14px;background:#f0f0f0;"></div>
<div class="t m" id="t45" style="left:212px;top:501.6px;letter-spacing:-0.329px;font-size:8.6px;color:#000">Action Output</div>
<svg style="left:313.5px;top:505.5px" width="6" height="4" viewBox="0 0 6 4"><path d="M0.500 0.500H5.500L3 3.500Z" fill="#111"/></svg>
<div class="a" style="left:187.500px;top:517px;width:831.500px;height:8px;overflow:hidden;background:#f0f0f0"><div class="a" style="left:0;top:0;width:818.500px;height:14px;background:#fff"></div>
<div class="a" style="left:15.5px;top:0;width:1px;height:14px;background:#e2e2e2"></div>
<div class="a" style="left:42.5px;top:0;width:1px;height:14px;background:#e2e2e2"></div>
<div class="a" style="left:80.5px;top:0;width:1px;height:14px;background:#e2e2e2"></div>
<div class="a" style="left:406.5px;top:0;width:1px;height:14px;background:#e2e2e2"></div>
<div class="a" style="left:732.5px;top:0;width:1px;height:14px;background:#e2e2e2"></div>
<div class="t" style="left:21.5px;top:2.500px;font-size:8.200px;color:#111">#</div>
<div class="t" style="left:47.5px;top:2.500px;font-size:8.200px;color:#111">Time</div>
<div class="t" style="left:85.5px;top:2.500px;font-size:8.200px;color:#111">Action</div>
<div class="t" style="left:412.5px;top:2.500px;font-size:8.200px;color:#111">Message</div>
<div class="t" style="left:739.5px;top:2.500px;font-size:8.200px;color:#111">Duration / Fetch</div>
<svg style="left:821.500px;top:3px" width="8" height="6" viewBox="0 0 8 6"><path d="M1 4.800L4 1.800L7 4.800" fill="none" stroke="#444" stroke-width="1.400"/></svg>
</div>
<div class="t m" id="t46" style="left:3px;top:532.5px;letter-spacing:0.044px;font-size:9px;color:#444">Query interrupted</div>
<div class="a" style="left:993px;top:533px;width:1px;height:10px;background:#c8c8c8;"></div>
<div class="a" style="left:1010px;top:533px;width:1px;height:10px;background:#c8c8c8;"></div>
<svg style="left:996px;top:533px" width="11" height="10" viewBox="0 0 11 10"><rect x="0.500" y="0.500" width="10" height="8.500" fill="#fff" stroke="#9a9a9a" stroke-width="0.900"/><path d="M3 2.800H8.200M3 4.800H8.200M3 6.800H8.200" stroke="#6a6a6a" stroke-width="0.800" fill="none"/></svg>
<div class="a" style="left:0px;top:546px;width:1024px;height:30px;background:#0d1732;"></div>
<div class="a" style="left:36px;top:546px;width:258px;height:30px;background:#f2f2f2;border-top:1px solid #d0d0d0"></div>
<svg style="left:12px;top:555px" width="12" height="12" viewBox="0 0 12 12"><path d="M0 1.700L5.300 0.900V5.700H0ZM5.900 0.800L12 0V5.700H5.900ZM0 6.300H5.300V11.100L0 10.300ZM5.900 6.300H12V12L5.900 11.200Z" fill="#fff"/></svg>
<svg style="left:42px;top:553px" width="17" height="17" viewBox="0 0 17 17"><circle cx="8.500" cy="8.500" r="6.600" fill="none" stroke="#111" stroke-width="1.900"/></svg>
<div class="t m" id="t47" style="left:66px;top:555.5px;letter-spacing:-0.299px;font-size:11.6px;color:#444">Type here to search</div>
<svg style="left:273px;top:554px" width="11" height="14" viewBox="0 0 11 14"><rect x="3.500" y="0.700" width="4" height="8" rx="2" fill="none" stroke="#444" stroke-width="1"/><path d="M1.200 6.500C1.200 12,9.800 12,9.800 6.500M5.500 10.700V13M3.500 13H7.500" fill="none" stroke="#444" stroke-width="1"/></svg>
<svg style="left:305px;top:555px" width="14" height="12" viewBox="0 0 14 12"><rect x="2.500" y="2.500" width="7" height="7" fill="none" stroke="#fff" stroke-width="1"/><path d="M0.500 0.500V2M0.500 10V11.500M11.500 0.500V2M11.500 10V11.500M2.500 0.500H9.500M2.500 11.500H9.500" stroke="#fff" stroke-width="1"/><rect x="11.500" y="3.800" width="1.800" height="1.800" fill="#fff"/><path d="M12.400 6.500V9.500" stroke="#fff" stroke-width="1"/></svg>
<div class="a" style="left:372px;top:574px;width:30px;height:2px;background:#86b6e8;"></div>
<div class="a" style="left:408px;top:574px;width:30px;height:2px;background:#86b6e8;"></div>
<div class="a" style="left:519px;top:574px;width:30px;height:2px;background:#86b6e8;"></div>
<div class="a" style="left:555px;top:574px;width:30px;height:2px;background:#86b6e8;"></div>
<div class="a" style="left:589px;top:546px;width:36px;height:30px;background:#3b4458;"></div>
<div class="a" style="left:589px;top:574px;width:36px;height:2px;background:#86b6e8;"></div>
<svg style="left:342px;top:553px" width="17" height="17" viewBox="0 0 17 17"><path d="M1 8C1.500 3.500,4.500 0.800,8.800 0.800C13.500 0.800,16 4,16 8.500V10.200H6C6.200 12.500,8 13.800,10.500 13.800C12.300 13.800,13.800 13.300,15.200 12.500V15.300C13.800 16,12 16.500,9.800 16.500C5 16.500,2.300 13.500,2.300 9.800C2.300 7.500,3.500 5.500,5.500 4.300C4 4.800,2 6,1 8ZM6.200 7H11.800C11.800 5,10.800 3.800,9 3.800C7.500 3.800,6.400 5.200,6.200 7Z" fill="#1e8be6"/></svg>
<svg style="left:378px;top:553px" width="18" height="16" viewBox="0 0 18 16"><path d="M0.500 2.500C0.500 1.500,1 1,2 1H6.500L8 2.500H16C17 2.500,17.500 3,17.500 4V14.500H0.500Z" fill="#e9b83a"/><rect x="0.500" y="4" width="17" height="10.500" fill="#f8d872"/><path d="M4 14.500V9H14V14.500H11.500V11.500H6.500V14.500Z" fill="#3c9ee8"/><rect x="2.500" y="1.800" width="3" height="1.200" fill="#f8e08a"/></svg>
<svg style="left:414px;top:552px" width="18" height="18" viewBox="0 0 18 18"><circle cx="9" cy="9" r="8.800" fill="#e0e0e0"/><path d="M9 9L1.380 4.600A8.800 8.800 0 0 1 16.620 4.600Z" fill="#db4437"/><path d="M9 9L16.620 4.600A8.800 8.800 0 0 1 9 17.800Z" fill="#f4c20d"/><path d="M9 9L9 17.800A8.800 8.800 0 0 1 1.380 4.600Z" fill="#0f9d58"/><path d="M9 5H16.800A8.800 8.800 0 0 0 1.380 4.600L5.500 11Z" fill="#db4437"/><path d="M12.500 11L9 17.800A8.800 8.800 0 0 0 16.800 5H9Z" fill="#f4c20d"/><path d="M5.500 11L1.380 4.600A8.800 8.800 0 0 0 9 17.800L12.500 11Z" fill="#0f9d58"/><circle cx="9" cy="9" r="4.100" fill="#f4f4f4"/><circle cx="9" cy="9" r="3.300" fill="#4285f4"/></svg>
<svg style="left:451px;top:552px" width="18" height="18" viewBox="0 0 18 18"><path d="M5.500 4.500C5.500 0.300,12.500 0.300,12.500 4.500" fill="none" stroke="#fff" stroke-width="1.200"/><path d="M0.500 4.500H17.500L16.500 17.500H1.500Z" fill="#fff"/><rect x="5" y="7" width="3.600" height="3.600" fill="#f25022"/><rect x="9.400" y="7" width="3.600" height="3.600" fill="#7fba00"/><rect x="5" y="11.400" width="3.600" height="3.600" fill="#00a4ef"/><rect x="9.400" y="11.400" width="3.600" height="3.600" fill="#ffb900"/></svg>
<svg style="left:489px;top:552px" width="16" height="18" viewBox="0 0 16 18"><path d="M9 0.300C7.500 2,6.500 3,5 4.200A6.200 6.200 0 0 1 14.500 9.500C14.500 13,12 16,7 17.700C8.500 16,9.500 15,11 13.800A6.200 6.200 0 0 1 1.500 8.500C1.500 5,4 2,9 0.300Z" fill="#f0622a"/><circle cx="8" cy="9" r="2.300" fill="#0d1732"/></svg>
<svg style="left:525px;top:552px" width="18" height="18" viewBox="0 0 18 18"><circle cx="8" cy="8" r="8" fill="#00aff0"/><text x="8" y="12.300" text-anchor="middle" font-family="Liberation Sans,sans-serif" font-weight="bold" font-size="12.500" fill="#fff">S</text><circle cx="14" cy="14" r="3.300" fill="#fff" stroke="#8cc63f" stroke-width="1.300"/></svg>
<svg style="left:562px;top:552px" width="19" height="18" viewBox="0 0 19 18"><rect x="8" y="2.500" width="10.500" height="13" fill="#f4f4f4" stroke="#d24726" stroke-width="0.800"/><path d="M11.500 6H16.500M11.500 8.500H16.500M11.500 11H16.500M11.500 13.500H16.500" stroke="#d24726" stroke-width="1.100"/><circle cx="13" cy="7" r="2.500" fill="#d24726"/><path d="M0 2L11 0.300V17.700L0 16Z" fill="#d24726"/><text x="5.500" y="12.500" text-anchor="middle" font-family="Liberation Sans,sans-serif" font-weight="bold" font-size="9.500" fill="#fff">P</text></svg>
<svg style="left:599px;top:552px" width="18" height="18" viewBox="0 0 18 18"><rect x="0" y="0" width="17.500" height="17.500" rx="2.500" fill="#2d6590"/><path d="M3 3.500C7.500 4,11 8,13.500 15.500M5 4C6.500 7.500,6.800 10.500,6.500 13.500M6.500 13.500L7.800 11.500M13.500 15.500L15 14.500M12.500 2.500L15.500 5.500M14.800 2L13 5.500" stroke="#e8eef4" stroke-width="0.900" fill="none" stroke-linecap="round"/></svg>
<svg style="left:814px;top:554.5px" width="12" height="12" viewBox="0 0 13 13"><circle cx="8.500" cy="3.300" r="2.300" fill="none" stroke="#fff" stroke-width="1"/><circle cx="4" cy="5.800" r="2" fill="none" stroke="#fff" stroke-width="1"/><path d="M0.500 12.500C1 9,3 8,4 8C5 8,7 9,7.500 12M6.500 7C7.500 6,10 5.800,11.500 9" fill="none" stroke="#fff" stroke-width="1"/></svg>
<svg style="left:842px;top:557px" width="10" height="7" viewBox="0 0 10 7"><path d="M0.800 5.800L5 1.500L9.200 5.800" fill="none" stroke="#fff" stroke-width="1.300"/></svg>
<svg style="left:859px;top:555px" width="13" height="12" viewBox="0 0 13 12"><path d="M1 11C1 5.500,5.500 1,11 1M3.800 11C3.800 7,7 3.800,11 3.800M6.500 11C6.500 8.500,8.500 6.500,11 6.500" fill="none" stroke="#7a8090" stroke-width="1"/><circle cx="10.300" cy="10.300" r="1.300" fill="#fff"/></svg>
<svg style="left:875px;top:555px" width="15" height="11" viewBox="0 0 15 11"><rect x="3.500" y="3.500" width="10" height="6" fill="none" stroke="#fff" stroke-width="1"/><rect x="5" y="5" width="7" height="3" fill="#fff"/><path d="M0.500 1.500V4.500M2.500 0.500V5.500M0.500 3H3.500V6" stroke="#fff" stroke-width="1" fill="none"/><path d="M14 5.500V7.500" stroke="#fff" stroke-width="1"/></svg>
<svg style="left:893px;top:555px" width="15" height="12" viewBox="0 0 15 12"><path d="M0.500 4H3L6 1V11L3 8H0.500Z" fill="none" stroke="#fff" stroke-width="1"/><path d="M8 4C9 5,9 7,8 8" fill="none" stroke="#fff" stroke-width="0.900"/><path d="M10 2.500C11.800 4.500,11.800 7.500,10 9.500" fill="none" stroke="#c0c4cc" stroke-width="0.900"/><path d="M12 1C14.500 4,14.500 8,12 11" fill="none" stroke="#7a8090" stroke-width="0.900"/></svg>
<div class="t m" id="t48" style="left:914px;top:555px;letter-spacing:-0.572px;font-size:9px;color:#fff">ENG</div>
<div class="t m" id="t49" style="left:945px;top:548px;letter-spacing:-0.247px;font-size:9px;color:#fff">5:22 PM</div>
<div class="t m" id="t50" style="left:940px;top:561.5px;letter-spacing:0.084px;font-size:9px;color:#fff">2/23/2019</div>
<svg style="left:992px;top:554px" width="14" height="13" viewBox="0 0 14 13"><path d="M0.500 0.500H12.500V9.500H4.500L1.500 12.200V9.500H0.500Z" fill="#fff"/><path d="M2.500 3H10.500M2.500 5.200H10.500" stroke="#8a90a0" stroke-width="0.500"/></svg>
<svg style="left:999px;top:560px" width="12" height="12" viewBox="0 0 12 12"><circle cx="6" cy="6" r="5.500" fill="#3c3c3c" stroke="#8a8a8a" stroke-width="0.800"/><text x="6" y="9.200" text-anchor="middle" font-family="Liberation Sans,sans-serif" font-size="9" font-weight="bold" fill="#fff">7</text></svg>
<div class="a" style="left:1019.5px;top:546px;width:1px;height:30px;background:#5a6070;"></div>
</body></html>
